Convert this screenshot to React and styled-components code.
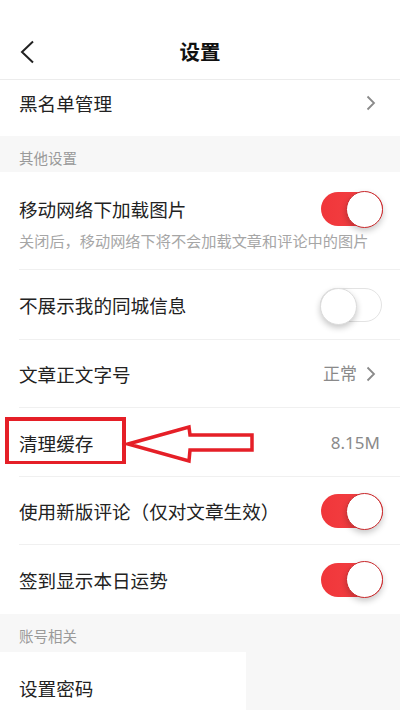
import React, { useState } from "react";
import styled, { createGlobalStyle } from "styled-components";

const GlobalStyle = createGlobalStyle`
  html, body {
    margin: 0;
    padding: 0;
    background: #f7f7f7;
  }
  body {
    font-family: "Noto Sans CJK SC", "Noto Sans", sans-serif;
    color: #222;
  }
`;

function App() {
  const [toggles, setToggles] = useState({
    images: true,
    city: false,
    comments: true,
    fortune: true,
  });

  const flip = (key) => setToggles((t) => ({ ...t, [key]: !t[key] }));

  return (
    <Page>
      <GlobalStyle />
      <Header>
        <Back>
          <svg width="16" height="24" viewBox="0 0 16 24">
            <path d="M14 1.5 L3 12 L14 22.5" fill="none" stroke="#222" strokeWidth="2" />
          </svg>
        </Back>
        <Title>设置</Title>
      </Header>

      <Row height={56} top={11} pad={24}>
        <Label>黑名单管理</Label>
        <Right>
          <Chevron />
        </Right>
      </Row>

      <Section>其他设置</Section>

      <TallRow divided>
        <Line>
          <Label>移动网络下加载图片</Label>
          <Switch on={toggles.images} onClick={() => flip("images")} />
        </Line>
        <Hint>关闭后，移动网络下将不会加载文章和评论中的图片</Hint>
      </TallRow>
      <Row divided height={70}>
        <Label>不展示我的同城信息</Label>
        <Switch on={toggles.city} onClick={() => flip("city")} />
      </Row>
      <Row divided height={68} pad={24}>
        <Label>文章正文字号</Label>
        <Right>
          <Value>正常</Value>
          <Chevron />
        </Right>
      </Row>
      <Row divided pad={20}>
        <Label>清理缓存</Label>
        <Value>8.15M</Value>
        <Mark>
          <svg width="260" height="56" viewBox="0 0 260 56">
            <rect x="7" y="11" width="117" height="44" fill="none" stroke="#e51f27" strokeWidth="4" />
            <path
              d="M128 36 L189 19 L190 27 L252 27 L252 42 L190 42 L189 53 Z"
              fill="none"
              stroke="#e51f27"
              strokeWidth="3.5"
              strokeLinejoin="miter"
            />
          </svg>
        </Mark>
      </Row>
      <Row divided height={68}>
        <Label>使用新版评论（仅对文章生效）</Label>
        <Switch on={toggles.comments} onClick={() => flip("comments")} />
      </Row>
      <Row>
        <Label>签到显示本日运势</Label>
        <Switch on={toggles.fortune} onClick={() => flip("fortune")} />
      </Row>

      <Section height={38} top={12}>账号相关</Section>

      <ShortRow>
        <Label>设置密码</Label>
      </ShortRow>
    </Page>
  );
}

function Chevron() {
  return (
    <svg width="10" height="16" viewBox="0 0 10 16">
      <path d="M1.5 1.5 L8 8 L1.5 14.5" fill="none" stroke="#8a8a8a" strokeWidth="1.8" />
    </svg>
  );
}

function Switch({ on, onClick }) {
  return (
    <Track on={on ? 1 : 0} onClick={onClick}>
      <Knob on={on ? 1 : 0} />
    </Track>
  );
}

export default App;

const Page = styled.div`
  width: 400px;
  height: 710px;
  overflow: hidden;
  background: #f7f7f7;
`;

const Header = styled.div`
  position: relative;
  height: 80px;
  background: #fff;
  border-bottom: 1px solid #ececec;
  display: flex;
  align-items: flex-end;
  justify-content: center;
  padding-bottom: 15px;
  box-sizing: border-box;
`;

const Back = styled.div`
  position: absolute;
  left: 19px;
  top: 40px;
  line-height: 0;
`;

const Title = styled.div`
  font-size: 20.5px;
  font-weight: 700;
  color: #111;
  line-height: 26px;
`;

const Row = styled.div`
  position: relative;
  height: ${(p) => p.height || 69}px;
  background: #fff;
  display: flex;
  align-items: ${(p) => (p.top ? "flex-start" : "center")};
  justify-content: space-between;
  padding: ${(p) => p.top || 0}px ${(p) => p.pad || 17}px 0 19px;
  box-sizing: border-box;

  &::after {
    content: "";
    display: ${(p) => (p.divided ? "block" : "none")};
    position: absolute;
    left: 19px;
    right: 0;
    bottom: 0;
    height: 1px;
    background: #f0f0f0;
  }
`;

const TallRow = styled(Row)`
  height: 98px;
  flex-direction: column;
  align-items: stretch;
  justify-content: flex-start;
  padding-top: 17px;
`;

const Line = styled.div`
  display: flex;
  align-items: center;
  justify-content: space-between;
  height: 40px;
`;

const ShortRow = styled(Row)`
  width: 246px;
  height: 58px;
  align-items: flex-end;
  padding-bottom: 10px;
`;

const Label = styled.div`
  font-size: 18.6px;
  color: #222;
  line-height: 24px;
  white-space: nowrap;
`;

const Hint = styled.div`
  font-size: 15.2px;
  color: #a6a6a6;
  line-height: 20px;
  white-space: nowrap;
  margin-top: 1px;
`;

const Right = styled.div`
  display: flex;
  align-items: center;
  gap: 9px;
  line-height: 0;
  height: 24px;
`;

const Value = styled.div`
  font-family: "Noto Sans", "Noto Sans CJK SC", sans-serif;
  font-size: 17px;
  color: #8a8a8a;
  line-height: 24px;
`;

const Section = styled.div`
  height: ${(p) => p.height || 36}px;
  padding: ${(p) => p.top || 12}px 0 0 19px;
  font-size: 14.5px;
  line-height: 20px;
  color: #9a9a9a;
  background: #f7f7f7;
  box-sizing: border-box;
`;

const Track = styled.div`
  position: relative;
  width: 62px;
  height: 34px;
  border-radius: 17px;
  flex-shrink: 0;
  cursor: pointer;
  box-sizing: border-box;
  background: ${(p) => (p.on ? "linear-gradient(90deg, #f0363a, #f44447)" : "#fff")};
  border: ${(p) => (p.on ? "none" : "1.5px solid #e3e3e3")};
  margin-right: ${(p) => (p.on ? 0 : 1)}px;
`;

const Knob = styled.div`
  position: absolute;
  top: -1.5px;
  left: ${(p) => (p.on ? 25 : -1.5)}px;
  width: 37px;
  height: 37px;
  border-radius: 50%;
  background: #fff;
  border: ${(p) => (p.on ? "1px solid #c9282b" : "1px solid #dcdcdc")};
  box-sizing: border-box;
  box-shadow: 0 3px 6px rgba(0, 0, 0, 0.22);
`;

const Mark = styled.div`
  position: absolute;
  left: 0;
  top: 0;
  line-height: 0;
  pointer-events: none;
`;
